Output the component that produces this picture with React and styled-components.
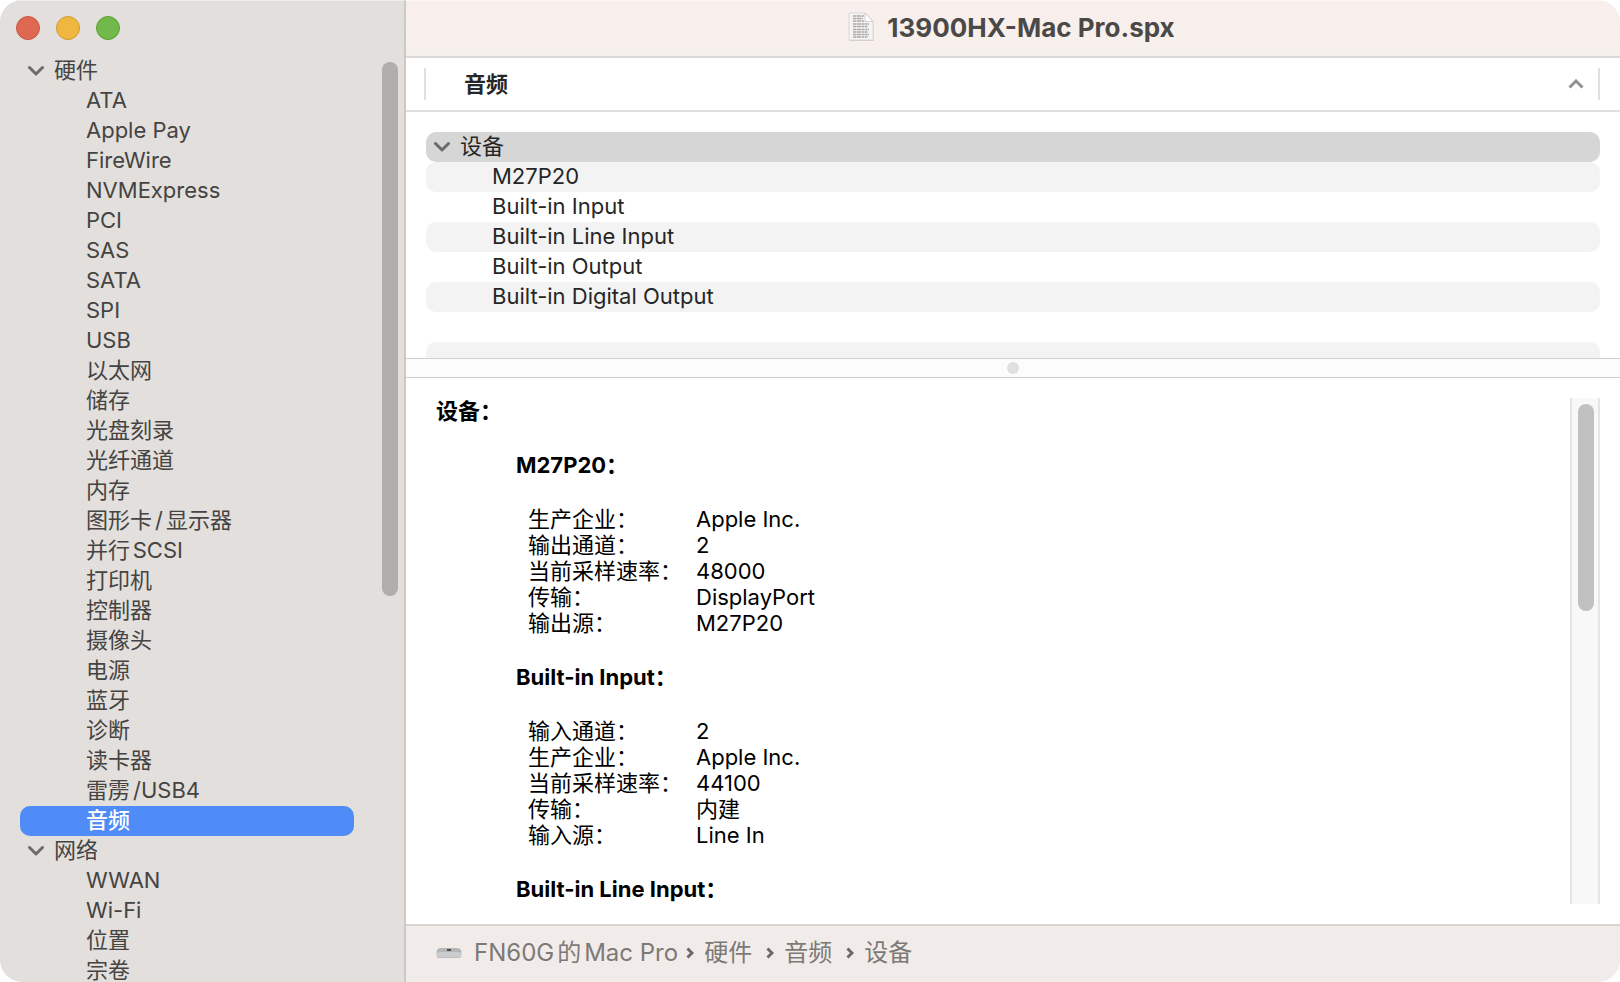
import React from "react";
import styled, { createGlobalStyle } from "styled-components";

const GlobalStyle = createGlobalStyle`
  * { box-sizing: border-box; }
  body { margin: 0; background: #fff; }
  button, a { font: inherit; color: inherit; text-decoration: none; }
`;

const Window = styled.div`
  display: grid;
  grid-template-columns: 406px 1fr;
  height: 100vh;
  overflow: hidden;
  border-radius: 22px;
  background: #fff;
  font-family: Inter, "Noto Sans CJK SC", sans-serif;
  font-size: 22px;
  line-height: 28px;
  text-autospace: normal;
`;

const Sidebar = styled.aside`
  display: flex;
  flex-direction: column;
  min-height: 0;
  background: #e2dfdc;
  border-top: 1px solid #efedeb;
  border-right: 2px solid #cbc8c5;
  color: #454442;
`;

const TrafficLights = styled.div`
  display: flex;
  flex: none;
  gap: 16px;
  height: 55px;
  padding: 15px 16px;
`;

const Light = styled.button`
  width: 24px;
  height: 24px;
  padding: 0;
  border: 1px solid ${(p) => p.$edge};
  border-radius: 50%;
  background: ${(p) => p.$fill};
`;

const SidebarBody = styled.div`
  display: flex;
  flex: 1;
  min-height: 0;
`;

const Tree = styled.nav`
  flex: 1;
  min-width: 0;
  overflow: hidden;
  padding: 0 28px 0 20px;
`;

const Row = styled.button`
  display: flex;
  align-items: center;
  width: 100%;
  height: 30px;
  padding: 0 0 2px ${(p) => (p.$group ? 8 : 66)}px;
  border: 0;
  border-radius: 10px;
  background: ${(p) => p.$bg || "transparent"};
  color: ${(p) => (p.$active ? "#fff" : "inherit")};
  font-weight: ${(p) => (p.$active ? 500 : 400)};
  text-align: left;
  white-space: nowrap;
`;

const RowIcon = styled.svg`
  flex: none;
  width: 16px;
  height: 12px;
  margin-right: 10px;
  fill: none;
  stroke: #6d6b6a;
  stroke-width: 3;
  stroke-linecap: round;
  stroke-linejoin: round;
`;

const Slash = styled.span`
  margin-left: 3px;
  margin-right: ${(p) => (p.$tight ? 0 : 3)}px;
`;

const SidebarTrack = styled.div`
  flex: none;
  width: 22px;
  padding: 6px 6px 6px 0;
`;

const Thumb = styled.div`
  width: 16px;
  height: ${(p) => p.$size};
  border-radius: 8px;
  background: ${(p) => p.$color};
`;

const Main = styled.main`
  display: flex;
  flex-direction: column;
  min-width: 0;
  min-height: 0;
`;

const TitleBar = styled.header`
  display: flex;
  flex: none;
  align-items: center;
  justify-content: center;
  gap: 12px;
  height: 58px;
  padding: 0 4px 2px 0;
  border-top: 1px solid #fcf7f6;
  border-bottom: 2px solid #dcd8d7;
  background: linear-gradient(#f9efec, #f6f0ed);
`;

const Title = styled.h1`
  margin: 0;
  color: #4b4947;
  font-size: 26px;
  font-weight: 700;
  font-optical-sizing: none;
`;

const ColumnHeader = styled.div`
  display: flex;
  flex: none;
  align-items: center;
  height: 54px;
  padding: 0 20px 0 18px;
  border-bottom: 2px solid #e0e0e0;
`;

const ColumnButton = styled.button`
  display: flex;
  flex: 1;
  align-items: center;
  justify-content: space-between;
  height: 32px;
  padding: 0 14px 0 38px;
  border: solid #e0e0e0;
  border-width: 0 2px;
  background: transparent;
  color: #262626;
  font-weight: 700;
`;

const DeviceList = styled.section`
  flex: none;
  height: 246px;
  overflow: hidden;
  padding: 20px 20px 0;
  color: #262626;
`;

const Splitter = styled.div`
  display: flex;
  flex: none;
  align-items: center;
  justify-content: center;
  height: 20px;
  border: solid #cfcfcf;
  border-width: 1px 0;
  background: #fcfcfc;
`;

const Knob = styled.span`
  width: 12px;
  height: 12px;
  border-radius: 50%;
  background: #e0e0e0;
`;

const DetailPane = styled.section`
  display: flex;
  flex: 1;
  min-height: 0;
  padding: 20px 20px 20px 30px;
`;

const Details = styled.div`
  flex: 1;
  overflow: hidden;
  color: #000;
  line-height: 26px;
`;

const DeviceTitle = styled.h2`
  margin: 0 0 28px;
  font-size: 22px;
  font-weight: 700;
`;

const DeviceName = styled.h3`
  margin: 0 0 28px 80px;
  font-size: 22px;
  font-weight: 700;
  font-optical-sizing: none;
`;

const Properties = styled.dl`
  display: grid;
  grid-template-columns: 168px 1fr;
  margin: 0 0 28px 92px;
`;

const Term = styled.dt`
  white-space: nowrap;
`;

const Value = styled.dd`
  margin: 0;
`;

const DetailTrack = styled.div`
  flex: none;
  width: 30px;
  padding: 6px;
  border: solid #e5e5e5;
  border-width: 0 2px;
  background: #f8f8f8;
`;

const PathBar = styled.footer`
  display: flex;
  flex: none;
  align-items: center;
  height: 58px;
  padding: 0 30px 2px;
  border-top: 2px solid #d8d4d1;
  background: #f1ece9;
  color: #7d7977;
  font-size: 24px;
`;

const Crumb = styled.a`
  margin-left: ${(p) => (p.$root ? 12 : 10)}px;
  white-space: nowrap;
`;

const CrumbArrow = styled.svg`
  width: 8px;
  height: 12px;
  margin-left: ${(p) => (p.$first ? 8 : 14)}px;
  fill: none;
  stroke: #6d6a68;
  stroke-width: 3;
`;

const hardware = [
  "ATA", "Apple Pay", "FireWire", "NVMExpress", "PCI", "SAS", "SATA", "SPI", "USB",
  "以太网", "储存", "光盘刻录", "光纤通道", "内存", "图形卡/显示器", "并行SCSI", "打印机",
  "控制器", "摄像头", "电源", "蓝牙", "诊断", "读卡器", "雷雳/USB4", "音频",
];
const network = ["WWAN", "Wi-Fi", "位置", "宗卷"];
const devices = ["M27P20", "Built-in Input", "Built-in Line Input", "Built-in Output", "Built-in Digital Output", "", ""];
const details = [
  {
    name: "M27P20",
    rows: [["生产企业", "Apple Inc."], ["输出通道", "2"], ["当前采样速率", "48000"], ["传输", "DisplayPort"], ["输出源", "M27P20"]],
  },
  {
    name: "Built-in Input",
    rows: [["输入通道", "2"], ["生产企业", "Apple Inc."], ["当前采样速率", "44100"], ["传输", "内建"], ["输入源", "Line In"]],
  },
  { name: "Built-in Line Input", rows: [] },
];

const Chevron = () => (
  <RowIcon viewBox="0 0 16 12" aria-hidden="true">
    <path d="M1.500 3.500L8 10L14.500 3.500" />
  </RowIcon>
);

const DocumentIcon = () => (
  <svg width="28" height="31" viewBox="0 0 28 31" aria-hidden="true">
    <path d="M2 1.5H18L26.5 10V28H2Z" fill="#c9c5c3" transform="translate(0 1)" />
    <path d="M2 1H18L26 9.500V28H2Z" fill="#f4f4f3" stroke="#dddad8" />
    <g stroke="#aaa9a8" strokeWidth="1.5" strokeDasharray="3 .5 5 .5 2 .5">
      <path d="M6 4H17M6 6.500H16M6 9H17M6 12H22M6 14.500H21M6 17.500H22M6 20H21M6 22.500H22M6 25H21" />
    </g>
    <path d="M18 1V9.500H26Z" fill="#fff" stroke="#c8c6c5" strokeWidth=".8" />
  </svg>
);

const ComputerIcon = () => (
  <svg width="26" height="10" viewBox="0 0 26 10" aria-hidden="true">
    <path d="M4 0.500H22Q24 .5 25 3V8Q25 9.500 23 9.500H3Q1 9.500 1 8V3Q2 .5 4 .5Z" fill="#b3b5b7" stroke="#a3a4a5" strokeWidth=".6" />
    <path d="M4 4H22Q24 4 25 5V8Q25 9.500 23 9.500H3Q1 9.500 1 8V5Q2 4 4 4Z" fill="#cbcccd" />
    <rect x="11" y="1" width="4" height="2" fill="#4c4c4c" />
  </svg>
);

const Label = ({ text }) => {
  const [before, after] = text.split("/");
  if (!after) return text;
  return (
    <span>
      {before}
      <Slash $tight={/^\w/.test(after)}>/</Slash>
      {after}
    </span>
  );
};

const Group = ({ label, items, active }) => (
  <>
    <Row $group>
      <Chevron />
      {label}
    </Row>
    {items.map((item) => (
      <Row key={item} $active={item === active} $bg={item === active ? "#4f8cf7" : undefined}>
        <Label text={item} />
      </Row>
    ))}
  </>
);

export default function App() {
  return (
    <>
      <GlobalStyle />
      <Window lang="zh-CN">
        <Sidebar>
          <TrafficLights>
            <Light aria-label="关闭" $fill="#df6852" $edge="#c9553f" />
            <Light aria-label="最小化" $fill="#efb740" $edge="#cf9a35" />
            <Light aria-label="缩放" $fill="#70b94a" $edge="#5aa038" />
          </TrafficLights>
          <SidebarBody>
            <Tree>
              <Group label="硬件" items={hardware} active="音频" />
              <Group label="网络" items={network} />
            </Tree>
            <SidebarTrack>
              <Thumb $size="58.4%" $color="#b0adaa" />
            </SidebarTrack>
          </SidebarBody>
        </Sidebar>
        <Main>
          <TitleBar>
            <DocumentIcon />
            <Title>13900HX-Mac Pro.spx</Title>
          </TitleBar>
          <ColumnHeader>
            <ColumnButton>
              音频
              <svg width="16" height="10" viewBox="0 0 16 10" fill="none" stroke="#929292" strokeWidth="3" aria-hidden="true">
                <path d="M1.500 8.500L8 2L14.500 8.500" />
              </svg>
            </ColumnButton>
          </ColumnHeader>
          <DeviceList>
            <Row $group $bg="#d6d6d6">
              <Chevron />
              设备
            </Row>
            {devices.map((device, i) => (
              <Row key={i} as={device ? "button" : "div"} $bg={(i % 2 === 0 && device) || i === 6 ? "#f3f3f3" : undefined}>
                {device}
              </Row>
            ))}
          </DeviceList>
          <Splitter>
            <Knob />
          </Splitter>
          <DetailPane>
            <Details>
              <DeviceTitle>设备：</DeviceTitle>
              {details.map(({ name, rows }) => (
                <React.Fragment key={name}>
                  <DeviceName>{name}：</DeviceName>
                  <Properties>
                    {rows.map(([term, value]) => (
                      <React.Fragment key={term}>
                        <Term>{term}：</Term>
                        <Value>{value}</Value>
                      </React.Fragment>
                    ))}
                  </Properties>
                </React.Fragment>
              ))}
            </Details>
            <DetailTrack>
              <Thumb $size="42%" $color="#c1c1c1" />
            </DetailTrack>
          </DetailPane>
          <PathBar>
            <ComputerIcon />
            <Crumb $root href="#">FN60G的Mac Pro</Crumb>
            {["硬件", "音频", "设备"].map((name, i) => (
              <React.Fragment key={name}>
                <CrumbArrow $first={i === 0} viewBox="0 0 8 12" aria-hidden="true">
                  <path d="M1.500 1.500L6 6L1.500 10.500" />
                </CrumbArrow>
                <Crumb href="#">{name}</Crumb>
              </React.Fragment>
            ))}
          </PathBar>
        </Main>
      </Window>
    </>
  );
}
